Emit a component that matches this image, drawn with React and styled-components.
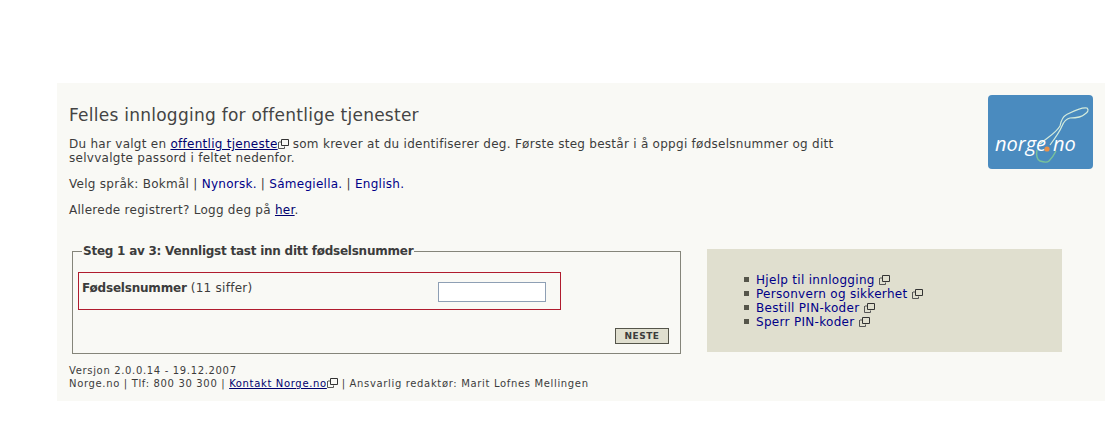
import styled, { createGlobalStyle } from "styled-components";

const links = ["Hjelp til innlogging", "Personvern og sikkerhet", "Bestill PIN-koder", "Sperr PIN-koder"];

const ExternalIcon = () => (
  <ExtSvg width="11" height="11" viewBox="0 0 11 11">
    <path d="M3.5 1.5h7v6h-7z" fill="none" stroke="#333" />
    <path d="M1 4h2M.5 4v6.5h6V8.500" fill="none" stroke="#555" />
  </ExtSvg>
);

const Logo = () => (
  <LogoBox>
    <svg width="105" height="74" viewBox="0 0 105 74">
      <path
        d="M52 49C60 42 68 38 72 31C73 26 74 22 78 20C84 17 92 12 99 13C101 15 100 17 97 19C94 22 88 23 82 23C78 24 76 26 74 31C72 36 68 42 62 50"
        fill="none"
        stroke="#d4ebdc"
        strokeWidth="1.2"
      />
      <path d="M49 55C48 60 49 65 52 66C55 67 59 68 61 66C63 64 66 60 68 56" fill="none" stroke="#79c29a" strokeWidth="1.4" />
      <circle cx="59" cy="54" r="2.6" fill="#e8914a" />
    </svg>
    <LogoText>
      norge<LogoDot>.</LogoDot>no
    </LogoText>
  </LogoBox>
);

const App = () => (
  <>
    <GlobalStyle />
    <Panel>
      <Top>
        <Intro>
          <Title>Felles innlogging for offentlige tjenester</Title>
          <Para>
            Du har valgt en{" "}
            <DarkLink href="#">
              offentlig tjeneste
              <ExternalIcon />
            </DarkLink>{" "}
            som krever at du identifiserer deg. Første steg består i å oppgi fødselsnummer og ditt selvvalgte passord i
            feltet nedenfor.
          </Para>
          <Para>
            Velg språk: Bokmål | <LangLink href="#">Nynorsk.</LangLink> | <LangLink href="#">Sámegiella.</LangLink> |{" "}
            <LangLink href="#">English.</LangLink>
          </Para>
          <Para>
            Allerede registrert? Logg deg på <DarkLink href="#">her</DarkLink>.
          </Para>
        </Intro>
        <Logo />
      </Top>
      <Columns>
        <div>
          <Fieldset>
            <Legend>Steg 1 av 3: Vennligst tast inn ditt fødselsnummer</Legend>
            <ErrorBox>
              <Label>
                <strong>Fødselsnummer</strong> (11 siffer)
              </Label>
              <Input type="text" />
            </ErrorBox>
            <ButtonRow>
              <NextButton type="button">NESTE</NextButton>
            </ButtonRow>
          </Fieldset>
          <Footer>
            Versjon 2.0.0.14 - 19.12.2007
            <br />
            Norge.no | Tlf: 800 30 300 |{" "}
            <DarkLink href="#">
              Kontakt Norge.no
              <ExternalIcon />
            </DarkLink>{" "}
            | Ansvarlig redaktør: Marit Lofnes Mellingen
          </Footer>
        </div>
        <HelpBox>
          <HelpList>
            {links.map((text) => (
              <HelpItem key={text}>
                <LangLink href="#">{text}</LangLink> <ExternalIcon />
              </HelpItem>
            ))}
          </HelpList>
        </HelpBox>
      </Columns>
    </Panel>
  </>
);

const GlobalStyle = createGlobalStyle`
  body {
    margin: 0;
    background: #fff;
    color: #3c3c3c;
    font-family: "DejaVu Sans", Verdana, sans-serif;
    font-size: 12px;
    letter-spacing: 0.27px;
  }
`;

const Panel = styled.div`
  box-sizing: border-box;
  width: 1048px;
  height: 318px;
  margin: 83px 0 0 57px;
  padding: 12px 12px 0 12px;
  background: #f9f9f5;
`;

const Top = styled.div`
  display: flex;
  justify-content: space-between;
  align-items: flex-start;
  height: 149px;
`;

const Intro = styled.div`
  width: 790px;
`;

const Title = styled.h1`
  margin: 10px 0 12px;
  font-size: 17px;
  font-weight: normal;
  line-height: 20px;
  letter-spacing: 0.25px;
  color: #444;
`;

const Para = styled.p`
  margin: 0 0 12px;
  line-height: 14px;
`;

const DarkLink = styled.a`
  color: #00006e;
  text-decoration: underline;
`;

const LangLink = styled.a`
  color: #000088;
  text-decoration: none;
`;

const ExtSvg = styled.svg`
  vertical-align: -1px;
`;

const LogoBox = styled.div`
  position: relative;
  width: 105px;
  height: 74px;
  box-sizing: border-box;
  border-radius: 4px;
  background: #4a8bbf;
`;

const LogoText = styled.span`
  position: absolute;
  left: 7px;
  top: 37px;
  font-family: "Open Sans", sans-serif;
  font-style: italic;
  font-size: 20px;
  line-height: 24px;
  letter-spacing: 0;
  color: #fff;
`;

const LogoDot = styled.span`
  color: transparent;
  letter-spacing: 2px;
`;

const Columns = styled.div`
  display: flex;
  align-items: flex-start;
  gap: 26px;
  padding-left: 3px;
`;

const Fieldset = styled.fieldset`
  box-sizing: border-box;
  width: 609px;
  height: 110px;
  margin: 0;
  padding: 0 11px 0 5px;
  border: 1px solid #85857a;
`;

const Legend = styled.legend`
  padding: 0 1px;
  margin-left: 4px;
  font-weight: bold;
  line-height: 14px;
  letter-spacing: -0.24px;
`;

const ErrorBox = styled.div`
  box-sizing: border-box;
  display: flex;
  justify-content: space-between;
  align-items: flex-start;
  width: 483px;
  height: 38px;
  margin-top: 14px;
  padding: 8px 14px 0 3px;
  border: 1px solid #b01c2e;
`;

const Label = styled.span`
  line-height: 14px;

  strong {
    letter-spacing: -0.2px;
  }
`;

const Input = styled.input`
  box-sizing: border-box;
  width: 108px;
  height: 20px;
  margin: 1px 0 0;
  padding: 0;
  border: 1px solid #8e9fb4;
  background: #fff;
`;

const ButtonRow = styled.div`
  display: flex;
  justify-content: flex-end;
  margin-top: 18px;
`;

const NextButton = styled.button`
  box-sizing: border-box;
  width: 54px;
  height: 16px;
  padding: 0;
  border: 1px solid #55554a;
  background: #e0dfcf;
  color: #3c3c3c;
  font-family: inherit;
  font-size: 9px;
  font-weight: bold;
  letter-spacing: 0.5px;
`;

const Footer = styled.div`
  margin: 10px 0 0 -3px;
  font-size: 10px;
  line-height: 13px;
  letter-spacing: 0.66px;
`;

const HelpBox = styled.div`
  box-sizing: border-box;
  width: 355px;
  height: 103px;
  margin-top: 5px;
  padding-top: 24px;
  background: #e0dfcf;
`;

const HelpList = styled.ul`
  margin: 0;
  padding: 0 0 0 49px;
  list-style: none;
  line-height: 14px;
  letter-spacing: 0.3px;
`;

const HelpItem = styled.li`
  position: relative;

  &::before {
    content: "";
    position: absolute;
    left: -12px;
    top: 4px;
    width: 5px;
    height: 5px;
    background: #55554a;
  }
`;

export default App;
